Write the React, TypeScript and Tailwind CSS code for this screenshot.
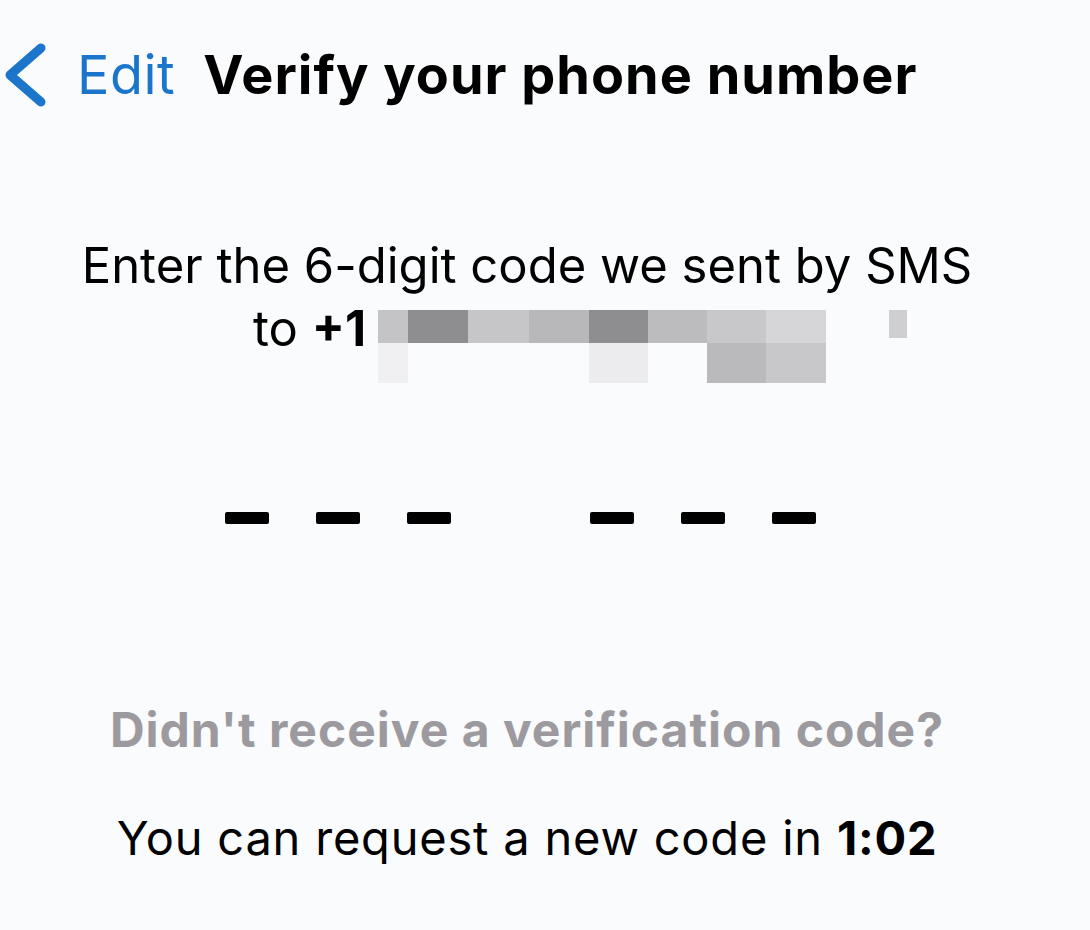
import React from "react";

const row1 = [
  { w: 30, c: "bg-[#c4c4c6]" },
  { w: 60, c: "bg-[#8e8e90]" },
  { w: 61, c: "bg-[#c6c6c8]" },
  { w: 60, c: "bg-[#b8b8ba]" },
  { w: 59, c: "bg-[#8e8e90]" },
  { w: 59, c: "bg-[#bcbcbe]" },
  { w: 59, c: "bg-[#c8c8ca]" },
  { w: 60, c: "bg-[#d6d6d8]" },
];

const row2 = [
  { w: 30, c: "bg-[#f0f0f2]" },
  { w: 60, c: "bg-transparent" },
  { w: 61, c: "bg-transparent" },
  { w: 60, c: "bg-transparent" },
  { w: 59, c: "bg-[#ececee]" },
  { w: 59, c: "bg-transparent" },
  { w: 59, c: "bg-[#bababc]" },
  { w: 60, c: "bg-[#c8c8ca]" },
];

// blurred-out phone digits
function Pixelated() {
  return (
    <div className="flex items-start">
      <div className="flex flex-col">
        <div className="flex h-[33px]">
          {row1.map((cell, i) => (
            <div key={i} className={cell.c} style={{ width: cell.w }} />
          ))}
        </div>
        <div className="flex h-[40px]">
          {row2.map((cell, i) => (
            <div key={i} className={cell.c} style={{ width: cell.w }} />
          ))}
        </div>
      </div>
      <div className="ml-[63px] w-[18px] h-[28px] bg-[#cfcfd1]" />
    </div>
  );
}

function Dash() {
  return <div className="w-[44px] h-[12px] rounded-[2px] bg-black" />;
}

export default function App() {
  return (
    <div
      className="w-[1090px] h-[930px] bg-[#fafbfd] text-black overflow-hidden"
      style={{ fontFamily: "Inter, 'Liberation Sans', sans-serif" }}
    >
      {/* Header */}
      <div className="flex items-center h-[150px]">
        <div className="flex items-center pl-[3px]">
          <svg width="44" height="64" viewBox="0 0 44 64" fill="none">
            <path
              d="M38 5 L7 32 L38 59"
              stroke="#1b76cb"
              strokeWidth="9"
              strokeLinecap="round"
              strokeLinejoin="round"
            />
          </svg>
          <span className="ml-[30px] text-[54px] leading-none text-[#1b76cb] tracking-[0.5px]">
            Edit
          </span>
        </div>
        <h1 className="ml-[28px] text-[54px] leading-none font-bold tracking-[1px]">
          Verify your phone number
        </h1>
      </div>

      {/* Body */}
      <div className="flex flex-col items-center pr-[36px]">
        <p className="mt-[84px] text-[49px] leading-[63px]">
          Enter the 6-digit code we sent by SMS
        </p>
        <div className="flex items-start pl-[106px] h-[80px]">
          <span className="text-[49px] leading-[63px]">
            to <span className="font-bold">+1</span>
          </span>
          <div className="ml-[12px] mt-[13px]">
            <Pixelated />
          </div>
        </div>

        <div className="mt-[135px] mr-[14px] flex items-center">
          <div className="flex gap-[47px]">
            <Dash />
            <Dash />
            <Dash />
          </div>
          <div className="ml-[139px] flex gap-[47px]">
            <Dash />
            <Dash />
            <Dash />
          </div>
        </div>

        <p className="mt-[182px] text-[48px] leading-none font-bold tracking-[1px] text-[#9c9a9f]">
          Didn't receive a verification code?
        </p>
        <p className="mt-[60px] text-[47px] leading-none tracking-[0.8px]">
          You can request a new code in <span className="font-bold">1:02</span>
        </p>
      </div>
    </div>
  );
}
